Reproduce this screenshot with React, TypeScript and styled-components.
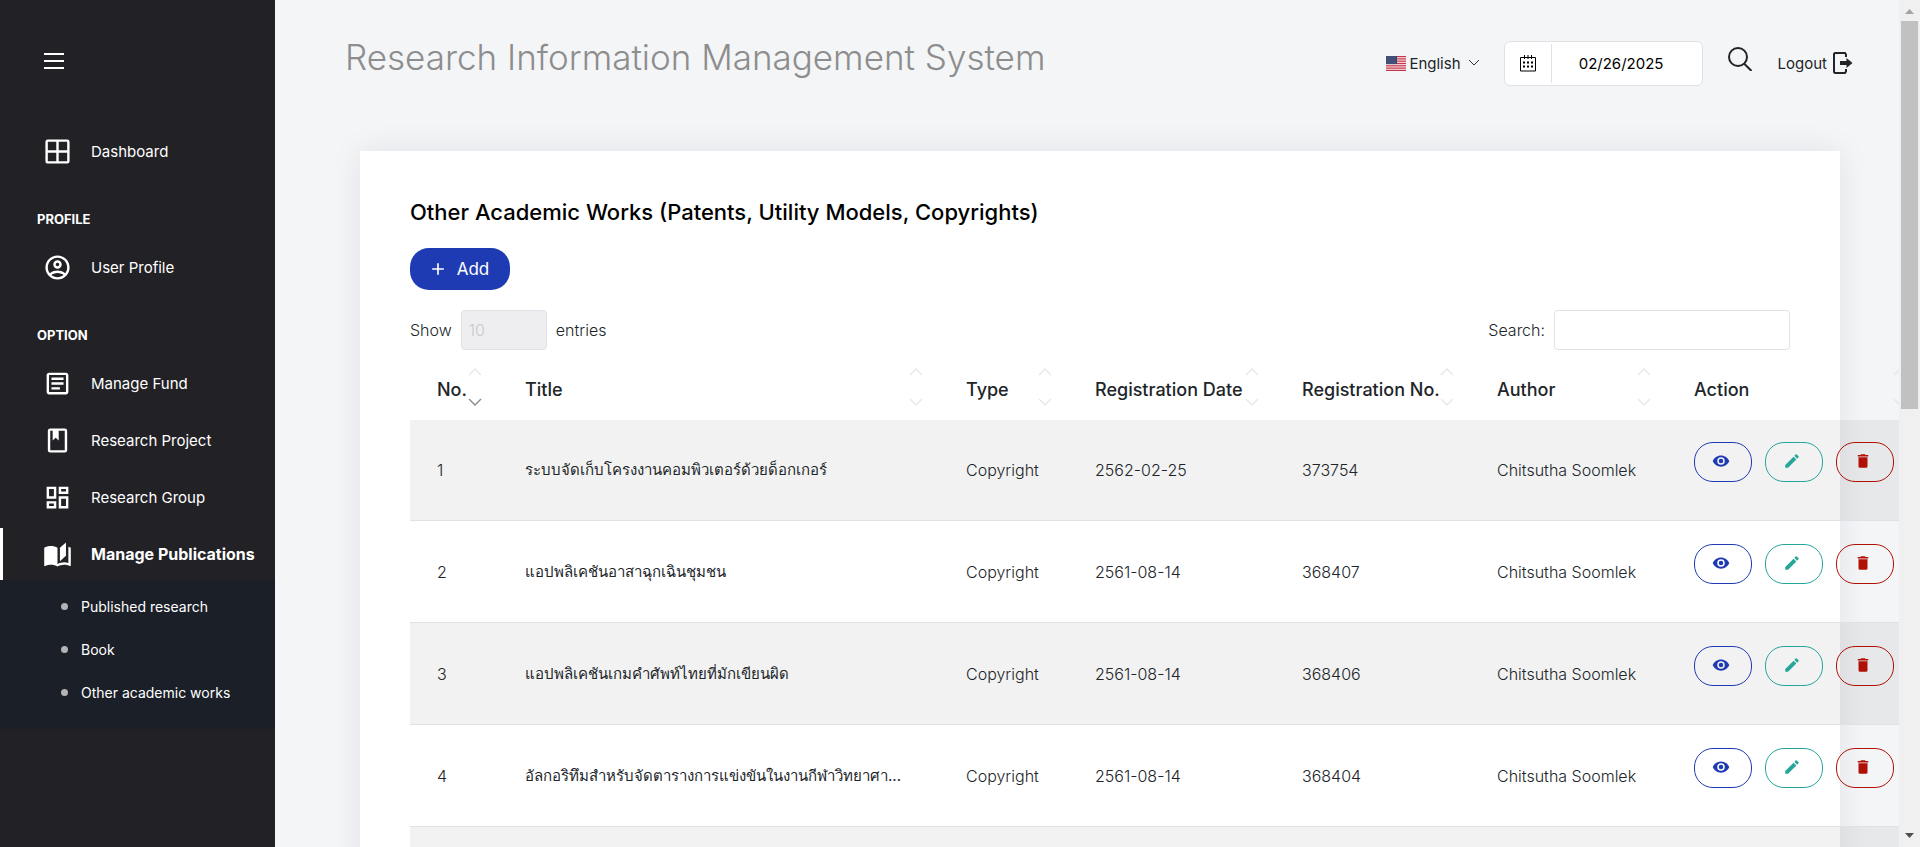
import React from "react";
import styled, { createGlobalStyle, css } from "styled-components";

const GlobalStyle = createGlobalStyle`
  *, *::before, *::after { box-sizing: border-box; }
  body {
    margin: 0;
    background: #f4f5f7;
    color: #212529;
    font-family: Inter, "Noto Sans", sans-serif;
    font-size: 16px;
  }
  button, input, select { font: inherit; color: inherit; }
  a { color: inherit; text-decoration: none; }
`;

const paths = {
  grid: "M4,2H20A2,2 0 0,1 22,4V20A2,2 0 0,1 20,22H4C2.92,22 2,21.1 2,20V4A2,2 0 0,1 4,2M4,4V11H11V4H4M4,20H11V13H4V20M20,20V13H13V20H20M20,4H13V11H20V4Z",
  account:
    "M12,2A10,10 0 0,0 2,12A10,10 0 0,0 12,22A10,10 0 0,0 22,12A10,10 0 0,0 12,2M7.07,18.28C7.5,17.38 10.12,16.5 12,16.5C13.88,16.5 16.5,17.38 16.93,18.28C15.57,19.36 13.86,20 12,20C10.14,20 8.43,19.36 7.07,18.28M18.36,16.83C16.93,15.09 13.46,14.5 12,14.5C10.54,14.5 7.07,15.09 5.64,16.83C4.62,15.5 4,13.82 4,12C4,7.59 7.59,4 12,4C16.41,4 20,7.59 20,12C20,13.82 19.38,15.5 18.36,16.83M12,6C10.06,6 8.5,7.56 8.5,9.5C8.5,11.44 10.06,13 12,13C13.94,13 15.5,11.44 15.5,9.5C15.5,7.56 13.94,6 12,6M12,11A1.5,1.5 0 0,1 10.5,9.5A1.5,1.5 0 0,1 12,8A1.5,1.5 0 0,1 13.5,9.5A1.5,1.5 0 0,1 12,11Z",
  article:
    "M19 5v14H5V5h14m0-2H5c-1.1 0-2 .9-2 2v14c0 1.1.9 2 2 2h14c1.1 0 2-.9 2-2V5c0-1.1-.9-2-2-2zM14 17H7v-2h7v2zm3-4H7v-2h10v2zm0-4H7V7h10v2z",
  book: "M18,2A2,2 0 0,1 20,4V20A2,2 0 0,1 18,22H6A2,2 0 0,1 4,20V4A2,2 0 0,1 6,2H18M18,4H13V12L10.5,9.75L8,12V4H6V20H18V4Z",
  dashboard:
    "M19,5V7H15V5H19M9,5V11H5V5H9M19,13V19H15V13H19M9,17V19H5V17H9M21,3H13V9H21V3M11,3H3V13H11V3M21,11H13V21H21V11M11,15H3V21H11V15Z",
  openBook:
    "M19 2L14 6.5V17.5L19 13V2M6.5 5C4.55 5 2.45 5.4 1 6.5V21.16C1 21.41 1.25 21.66 1.5 21.66C1.6 21.66 1.65 21.59 1.75 21.59C3.1 20.94 5.05 20.5 6.5 20.5C8.45 20.5 10.55 20.9 12 22C13.35 21.15 15.8 20.5 17.5 20.5C19.15 20.5 20.85 20.81 22.25 21.56C22.35 21.61 22.4 21.59 22.5 21.59C22.75 21.59 23 21.34 23 21.09V6.5C22.4 6.05 21.75 5.75 21 5.5V19C19.9 18.65 18.7 18.5 17.5 18.5C15.8 18.5 13.35 19.15 12 20V6.5C10.55 5.4 8.45 5 6.5 5Z",
  eye: "M12,9A3,3 0 0,0 9,12A3,3 0 0,0 12,15A3,3 0 0,0 15,12A3,3 0 0,0 12,9M12,17A5,5 0 0,1 7,12A5,5 0 0,1 12,7A5,5 0 0,1 17,12A5,5 0 0,1 12,17M12,4.5C7,4.5 2.73,7.61 1,12C2.73,16.39 7,19.5 12,19.5C17,19.5 21.27,16.39 23,12C21.27,7.61 17,4.5 12,4.5Z",
  pencil:
    "M20.71,7.04C21.1,6.65 21.1,6 20.71,5.63L18.37,3.29C18,2.9 17.35,2.9 16.96,3.29L15.12,5.12L18.87,8.87M3,17.25V21H6.75L17.81,9.93L14.06,6.18L3,17.25Z",
  trash: "M19,4H15.5L14.5,3H9.5L8.5,4H5V6H19M6,19A2,2 0 0,0 8,21H16A2,2 0 0,0 18,19V7H6V19Z",
  plus: "M19,13H13V19H11V13H5V11H11V5H13V11H19V13Z",
};

type IconName = keyof typeof paths;

const Icon = ({ name, size }: { name: IconName; size: number }) => (
  <svg width={size} height={size} viewBox="0 0 24 24" fill="currentColor" aria-hidden="true">
    <path d={paths[name]} />
  </svg>
);

/* ---------- page frame ---------- */

const Shell = styled.div`
  display: flex;
  height: 100vh;
  overflow: hidden;
`;

const Main = styled.main`
  flex: 1;
  min-width: 0;
  overflow: hidden;
  padding: 0 59px 0 85px;
`;

/* ---------- sidebar ---------- */

const Sidebar = styled.nav`
  flex: none;
  width: 275px;
  background: #222126;
  color: #fff;
`;

const MenuToggle = styled.button`
  display: block;
  margin: 51px 0 54px 44px;
  padding: 0;
  width: 20px;
  height: 20px;
  border: 0;
  background: none;
`;

const NavList = styled.ul`
  margin: 0;
  padding: 0;
  list-style: none;
  display: flex;
  flex-direction: column;
  gap: 5px;
`;

const NavHeading = styled.h2`
  display: flex;
  align-items: flex-end;
  height: 64px;
  margin: 0;
  padding: 0 37px 12px;
  font-size: 13px;
  line-height: 20px;
  font-weight: 700;
`;

const NavLink = styled.a<{ $active?: boolean }>`
  display: flex;
  align-items: center;
  gap: 19px;
  height: 52px;
  padding-left: 40px;
  border-left: 3px solid transparent;
  font-size: 15px;
  white-space: nowrap;
  ${(p) =>
    p.$active &&
    css`
      border-left-color: #fff;
      font-size: 16px;
      font-weight: 700;
    `}
`;

const SubMenu = styled.ul`
  margin: 0;
  padding: 5px 0 15px;
  list-style: none;
  background: #1b1f27;
`;

const SubLink = styled.a`
  display: flex;
  align-items: center;
  gap: 13px;
  height: 43px;
  padding-left: 61px;
  font-size: 14px;

  &::before {
    content: "";
    width: 7px;
    height: 7px;
    border-radius: 50%;
    background: #b3b3b3;
  }
`;

/* ---------- top bar ---------- */

const TopBar = styled.header`
  display: flex;
  justify-content: space-between;
  align-items: center;
  height: 151px;
  margin: 0 -13px 0 -15px;
  padding-bottom: 25px;
`;

const SystemTitle = styled.h1`
  margin: 0;
  padding-bottom: 12px;
  font-size: 35px;
  line-height: 44px;
  font-weight: 300;
  color: #8d8d8d;
  white-space: nowrap;
`;

const Tools = styled.div`
  display: flex;
  align-items: center;
  white-space: nowrap;
  font-size: 15px;
`;

const Language = styled.button`
  display: flex;
  align-items: center;
  gap: 3px;
  padding: 0;
  margin-right: 24px;
  border: 0;
  background: none;
  font-size: 15px;

  svg:last-child { margin-left: 4px; }
`;

const DateBox = styled.label`
  display: flex;
  align-items: center;
  width: 199px;
  height: 45px;
  margin-right: 25px;
  padding: 2px 0;
  border: 1px solid #dee2e6;
  border-radius: 6px;
  background: #fff;
  color: #000;
`;

const DateIcon = styled.span`
  display: flex;
  align-items: center;
  justify-content: center;
  width: 47px;
  align-self: stretch;
  border-right: 1px solid #dee2e6;
`;

const DateInput = styled.input`
  flex: 1;
  min-width: 0;
  border: 0;
  padding: 0 11px 0 0;
  background: none;
  text-align: center;
  font-size: 15px;
`;

const IconButton = styled.button`
  display: flex;
  margin-right: 26px;
  padding: 0 0 8px;
  border: 0;
  background: none;
`;

const Logout = styled.a`
  display: flex;
  align-items: center;
  gap: 6px;
`;

/* ---------- card ---------- */

const Card = styled.section`
  min-height: 900px;
  padding: 47px 50px;
  background: #fff;
  box-shadow: 0 0 30px rgba(0, 0, 40, 0.08);
`;

const CardTitle = styled.h2`
  margin: 0 0 22px;
  font-size: 22px;
  line-height: 28px;
  font-weight: 500;
  color: #000;
  white-space: nowrap;
`;

const AddButton = styled.button`
  display: flex;
  align-items: center;
  justify-content: center;
  gap: 9px;
  width: 100px;
  height: 42px;
  padding: 0 3px 0 0;
  border: 0;
  border-radius: 19px;
  background: #1f3bb3;
  color: #fff;
  font-size: 17px;
`;

const TableTools = styled.div`
  display: flex;
  justify-content: space-between;
  margin-top: 20px;
  font-weight: 300;
`;

const Field = styled.label`
  display: flex;
  align-items: center;
  gap: 9px;
  height: 40px;
`;

const PageSize = styled.select`
  appearance: none;
  width: 86px;
  height: 40px;
  padding: 0 7px;
  border: 1px solid #dee2e6;
  border-radius: 4px;
  background: #eeeef1;
  color: #c9c8c8;
  opacity: 1;
`;

const SearchInput = styled.input`
  width: 236px;
  height: 40px;
  padding: 0 8px;
  border: 1px solid #dee2e6;
  border-radius: 4px;
  background: #fff;
`;

/* ---------- table ---------- */

const Table = styled.table`
  width: 1513px;
  table-layout: fixed;
  border-collapse: separate;
  border-spacing: 0;
  white-space: nowrap;
  font-weight: 300;
`;

const Th = styled.th`
  height: 70px;
  padding: 8px 0 0 27px;
  text-align: left;
  font-size: 18px;
  font-weight: 500;
`;

const HeadCell = styled.div`
  display: flex;
  align-items: center;
  justify-content: space-between;
  margin-right: 16px;
`;

const SortIcon = styled.svg`
  flex: none;
  margin-bottom: 4px;
`;

const Row = styled.tr`
  &:nth-child(odd) td { background: rgba(0, 0, 0, 0.05); }
  &:first-child td { height: 101px; }
`;

const Td = styled.td`
  height: 102px;
  padding: 0 0 0 27px;
  border-bottom: 1px solid #dee2e6;
`;

const TitleTd = styled(Td)`
  font-size: 15px;
  font-weight: 400;
`;

const Actions = styled.div`
  display: flex;
  gap: 13px;
  padding-bottom: 16px;
`;

const ActionButton = styled.button`
  display: flex;
  align-items: center;
  justify-content: center;
  width: 58px;
  height: 40px;
  padding: 0 5px 2px 0;
  border: 1px solid currentColor;
  border-radius: 19px;
  background: none;

  &[data-kind="view"] { color: #1f3bb3; }
  &[data-kind="edit"] { color: #26a69a; }
  &[data-kind="delete"] { color: #b01005; }
`;

/* ---------- scroll bar ---------- */

const ScrollTrack = styled.div`
  flex: none;
  display: flex;
  flex-direction: column;
  align-items: center;
  width: 21px;
  padding: 9px 0;
  background: #f0f0f0;
`;

const ScrollThumb = styled.div`
  width: 17px;
  height: 388px;
  margin: 7px 0 auto;
  background: #c1c1c1;
`;

/* ---------- data ---------- */

const research: { icon: IconName; label: string; active?: boolean }[] = [
  { icon: "article", label: "Manage Fund" },
  { icon: "book", label: "Research Project" },
  { icon: "dashboard", label: "Research Group" },
  { icon: "openBook", label: "Manage Publications", active: true },
];

const publications = ["Published research", "Book", "Other academic works"];

const columns: { label: string; width: number; sorted?: boolean }[] = [
  { label: "No.", width: 88, sorted: true },
  { label: "Title", width: 441 },
  { label: "Type", width: 129 },
  { label: "Registration Date", width: 207 },
  { label: "Registration No.", width: 195 },
  { label: "Author", width: 197 },
  { label: "Action", width: 256 },
];

const works = [
  { title: "ระบบจัดเก็บโครงงานคอมพิวเตอร์ด้วยด็อกเกอร์", date: "2562-02-25", no: "373754" },
  { title: "แอปพลิเคชันอาสาฉุกเฉินชุมชน", date: "2561-08-14", no: "368407" },
  { title: "แอปพลิเคชันเกมคำศัพท์ไทยที่มักเขียนผิด", date: "2561-08-14", no: "368406" },
  { title: "อัลกอริทึมสำหรับจัดตารางการแข่งขันในงานกีฬาวิทยาศา...", date: "2561-08-14", no: "368404" },
  { title: "", date: "", no: "" },
];

const Flag = () => (
  <svg width="20" height="15" viewBox="0 0 20 15" aria-hidden="true">
    <rect width="20" height="15" fill="#f3dfe2" />
    {[0, 1, 2, 3, 4, 5, 6].map((i) => (
      <rect key={i} y={(i * 30) / 13} width="20" height={15 / 13} fill="#c8344a" />
    ))}
    <rect width="11" height={(15 * 7) / 13} fill="#34436f" />
    {[1, 3, 5, 7].map((y) =>
      [1, 3, 5, 7, 9].map((x) => <circle key={`${x}${y}`} cx={x} cy={y} r="0.4" fill="#aab0c6" />)
    )}
  </svg>
);

const Sort = ({ sorted }: { sorted?: boolean }) => (
  <SortIcon width="14" height="38" viewBox="0 0 14 38" fill="none" strokeWidth="1.3" aria-hidden="true">
    <path d="M1 7L7 1L13 7" stroke="#e6e6e7" />
    <path d="M1 31L7 37L13 31" stroke={sorted ? "#85888b" : "#e6e6e7"} />
  </SortIcon>
);

export default function App() {
  return (
    <>
      <GlobalStyle />
      <Shell>
        <Sidebar>
          <MenuToggle aria-label="Toggle menu">
            <svg width="20" height="20" viewBox="0 0 20 20" stroke="#fff" strokeWidth="2">
              <path d="M0 3H20M0 10H20M0 17H20" />
            </svg>
          </MenuToggle>
          <NavLink href="#dashboard">
            <Icon name="grid" size={29} />
            Dashboard
          </NavLink>
          <NavHeading>PROFILE</NavHeading>
          <NavLink href="#profile">
            <Icon name="account" size={29} />
            User Profile
          </NavLink>
          <NavHeading>OPTION</NavHeading>
          <NavList>
            {research.map((item) => (
              <li key={item.label}>
                <NavLink href="#" $active={item.active}>
                  <Icon name={item.icon} size={29} />
                  {item.label}
                </NavLink>
              </li>
            ))}
          </NavList>
          <SubMenu>
            {publications.map((label) => (
              <li key={label}>
                <SubLink href="#">{label}</SubLink>
              </li>
            ))}
          </SubMenu>
        </Sidebar>

        <Main>
          <TopBar>
            <SystemTitle>Research Information Management System</SystemTitle>
            <Tools>
              <Language>
                <Flag />
                English
                <svg width="12" height="8" viewBox="0 0 12 8" fill="none" stroke="#333" aria-hidden="true">
                  <path d="M1 1L6 6L11 1" />
                </svg>
              </Language>
              <DateBox>
                <DateIcon>
                  <svg width="16" height="17" viewBox="0 0 16 17" fill="none" stroke="#000" aria-hidden="true">
                    <path d="M0.5 2.5H15.5V16H0.5ZM4.5 0V4M8 0V4M11.5 0V4" />
                    <path d="M3 7.5H13M3 11.5H13" strokeWidth="2" strokeDasharray="2 2" />
                  </svg>
                </DateIcon>
                <DateInput aria-label="Date" defaultValue="02/26/2025" />
              </DateBox>
              <IconButton aria-label="Search">
                <svg width="24" height="24" viewBox="0 0 24 24" fill="none" stroke="#212529" strokeWidth="2">
                  <circle cx="10" cy="10" r="9" />
                  <path d="M16 16.5L23.5 24" />
                </svg>
              </IconButton>
              <Logout href="#logout">
                Logout
                <svg width="20" height="22" viewBox="0 0 20 22" aria-hidden="true">
                  <path d="M13 5V2.5L12 1H2L1 2V20L2 21H12L13 19.5V17" fill="none" stroke="#212529" strokeWidth="2" />
                  <path d="M7 9H13.5V6L19.5 11L13.5 16V13H7Z" fill="#212529" />
                </svg>
              </Logout>
            </Tools>
          </TopBar>

          <Card>
            <CardTitle>Other Academic Works (Patents, Utility Models, Copyrights)</CardTitle>
            <AddButton>
              <Icon name="plus" size={20} />
              Add
            </AddButton>
            <TableTools>
              <Field>
                Show
                <PageSize disabled defaultValue="10">
                  <option>10</option>
                </PageSize>
                entries
              </Field>
              <Field>
                Search:
                <SearchInput type="search" />
              </Field>
            </TableTools>
            <Table>
              <colgroup>
                {columns.map((c) => (
                  <col key={c.label} width={c.width} />
                ))}
              </colgroup>
              <thead>
                <tr>
                  {columns.map((c) => (
                    <Th key={c.label}>
                      <HeadCell>
                        {c.label}
                        <Sort sorted={c.sorted} />
                      </HeadCell>
                    </Th>
                  ))}
                </tr>
              </thead>
              <tbody>
                {works.map((w, i) => (
                  <Row key={i}>
                    <Td>{w.title && i + 1}</Td>
                    <TitleTd lang="th">{w.title}</TitleTd>
                    <Td>{w.title && "Copyright"}</Td>
                    <Td>{w.date}</Td>
                    <Td>{w.no}</Td>
                    <Td>{w.title && "Chitsutha Soomlek"}</Td>
                    <Td>
                      {w.title && (
                        <Actions>
                          <ActionButton data-kind="view" aria-label="View">
                            <Icon name="eye" size={18} />
                          </ActionButton>
                          <ActionButton data-kind="edit" aria-label="Edit">
                            <Icon name="pencil" size={18} />
                          </ActionButton>
                          <ActionButton data-kind="delete" aria-label="Delete">
                            <Icon name="trash" size={18} />
                          </ActionButton>
                        </Actions>
                      )}
                    </Td>
                  </Row>
                ))}
              </tbody>
            </Table>
          </Card>
        </Main>

        <ScrollTrack aria-hidden="true">
          <svg width="9" height="5" viewBox="0 0 9 5">
            <path d="M0 5L4.5 0L9 5Z" fill="#a3a3a3" />
          </svg>
          <ScrollThumb />
          <svg width="9" height="5" viewBox="0 0 9 5">
            <path d="M0 0L4.5 5L9 0Z" fill="#505050" />
          </svg>
        </ScrollTrack>
      </Shell>
    </>
  );
}
